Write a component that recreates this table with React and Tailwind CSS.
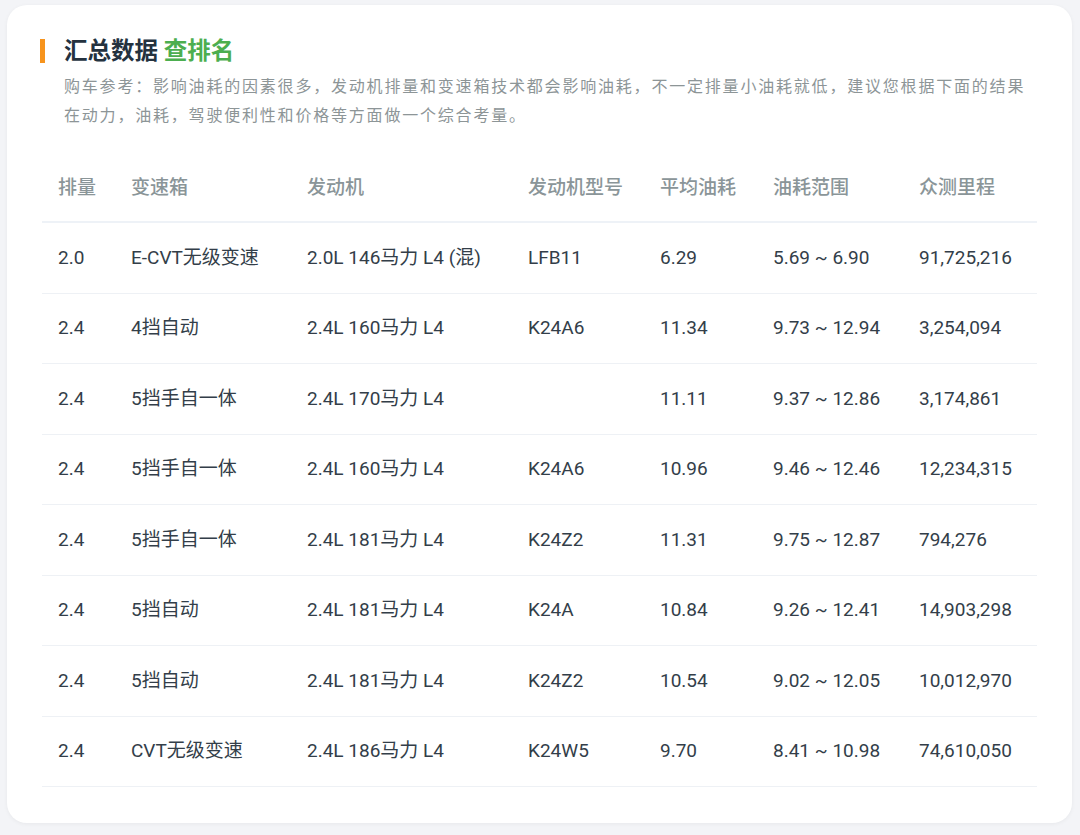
import React from 'react';

const rows = [
  ['2.0', 'E-CVT无级变速', '2.0L 146马力 L4 (混)', 'LFB11', '6.29', '5.69 ~ 6.90', '91,725,216'],
  ['2.4', '4挡自动', '2.4L 160马力 L4', 'K24A6', '11.34', '9.73 ~ 12.94', '3,254,094'],
  ['2.4', '5挡手自一体', '2.4L 170马力 L4', '', '11.11', '9.37 ~ 12.86', '3,174,861'],
  ['2.4', '5挡手自一体', '2.4L 160马力 L4', 'K24A6', '10.96', '9.46 ~ 12.46', '12,234,315'],
  ['2.4', '5挡手自一体', '2.4L 181马力 L4', 'K24Z2', '11.31', '9.75 ~ 12.87', '794,276'],
  ['2.4', '5挡自动', '2.4L 181马力 L4', 'K24A', '10.84', '9.26 ~ 12.41', '14,903,298'],
  ['2.4', '5挡自动', '2.4L 181马力 L4', 'K24Z2', '10.54', '9.02 ~ 12.05', '10,012,970'],
  ['2.4', 'CVT无级变速', '2.4L 186马力 L4', 'K24W5', '9.70', '8.41 ~ 10.98', '74,610,050'],
];

const headers = ['排量', '变速箱', '发动机', '发动机型号', '平均油耗', '油耗范围', '众测里程'];

const cols = 'grid grid-cols-[73px_176px_221px_132px_113px_146px_134px]';

export default function App() {
  return (
    <div
      className="min-h-[835px] bg-[#f3f4f7] pt-[5px] pl-[7px] pr-[8px]"
      style={{ fontFamily: 'Roboto, "Noto Sans CJK SC", sans-serif' }}
    >
      <div className="h-[818px] rounded-[20px] bg-white shadow-[0_1px_4px_rgba(0,0,0,0.05)] pt-[33px] pl-[33px] pr-[35px]">
        <div className="flex items-center h-[26px]">
          <div className="w-[5px] h-[24px] bg-[#f7941d]" />
          <h1 className="ml-[19px] text-[23.5px] leading-[26px] font-bold text-[#24323f]">
            汇总数据 <span className="text-[#4cae4f]">查排名</span>
          </h1>
        </div>
        <p className="mt-[8px] ml-[24px] text-[16px] leading-[29px] tracking-[1.8px] text-[#8d9597]">
          购车参考：影响油耗的因素很多，发动机排量和变速箱技术都会影响油耗，不一定排量小油耗就低，建议您根据下面的结果
          <br />
          在动力，油耗，驾驶便利性和价格等方面做一个综合考量。
        </p>

        <div className="mt-[30px] ml-[2px]">
          <div className={`${cols} h-[63px] pt-[15px] border-b-2 border-[#eef2f7]`}>
            {headers.map((h) => (
              <div key={h} className="pl-[16px] text-[19px] leading-[26px] font-medium text-[#8a9598]">
                {h}
              </div>
            ))}
          </div>
          {rows.map((r, i) => (
            <div key={i} className={`${cols} h-[70.5px] items-center border-b border-[#eef1f5]`}>
              {r.map((c, j) => (
                <div key={j} className="pl-[16px] text-[19px] leading-[26px] text-[#333e49] whitespace-nowrap">
                  {c}
                </div>
              ))}
            </div>
          ))}
        </div>
      </div>
    </div>
  );
}
